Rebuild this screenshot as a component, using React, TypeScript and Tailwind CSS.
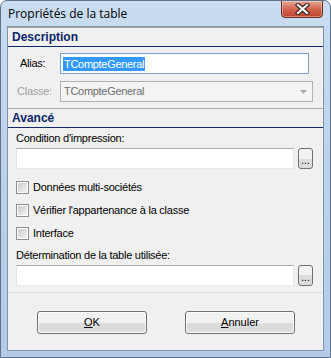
const font = { fontFamily: '"Liberation Sans", Arial, sans-serif' };

function Checkbox({ label }: { label: string }) {
  return (
    <div className="flex h-[13px] items-center gap-[4px] pl-[8px]">
      <div className="flex h-[13px] w-[13px] items-center justify-center border border-[#8e8f8f] bg-white">
        <div className="h-[9px] w-[9px] bg-gradient-to-br from-[#cbcbcb] to-[#f4f4f4]" />
      </div>
      <span className="text-[11px] leading-[13px] tracking-[-0.25px] text-black">{label}</span>
    </div>
  );
}

function Ellipsis() {
  return (
    <div className="flex h-[21px] w-[15px] items-end justify-center rounded-[3px] border border-[#707070] bg-gradient-to-b from-[#f2f2f2] from-50% to-[#dcdcdc] to-50% pb-[2px] text-[10px] leading-[10px] text-black">
      ...
    </div>
  );
}

function TextInput() {
  return (
    <div className="h-[21px] w-[278px] border border-[#e3e9ef] border-t-[#abadb3] border-l-[#e2e3ea] bg-white" />
  );
}

function Header({ title }: { title: string }) {
  return (
    <div className="flex h-[20px] items-center border-t border-b border-t-[#a7a7a7] border-b-[#0e2a68] bg-[#f0f0f0] pl-[4px]">
      <span className="text-[12px] font-bold leading-[14px] text-[#0a2468]">{title}</span>
    </div>
  );
}

function Button({ mnemonic, rest }: { mnemonic: string; rest: string }) {
  return (
    <div className="flex h-[23px] w-[110px] items-center justify-center rounded-[3px] border border-[#707070] bg-gradient-to-b from-[#f2f2f2] from-50% to-[#dcdcdc] to-50% text-[11px] text-black shadow-[inset_0_0_0_1px_#fcfcfc]">
      <span>
        <span className="underline">{mnemonic}</span>
        {rest}
      </span>
    </div>
  );
}

export default function App() {
  return (
    <div
      className="relative flex h-[358px] w-[331px] flex-col overflow-hidden rounded-t-[7px] border border-[#5a7290] bg-gradient-to-b from-[#c9dcf0] via-[#bcd2ea] to-[#b3cbe6]"
      style={font}
    >
      {/* title bar */}
      <div className="flex h-[25px] items-start justify-between">
        <span
          className="pl-[7px] pt-[5px] text-[12px] leading-[15px] text-black"
          style={{ fontFamily: '"Open Sans", "Liberation Sans", sans-serif' }}
        >
          Propriétés de la table
        </span>
        <div className="mr-[7px] mt-[-1px] flex h-[18px] w-[42px] items-center justify-center rounded-b-[4px] border border-[#6b2d22] bg-gradient-to-b from-[#e6a698] via-[#d0664f] to-[#c1432c] shadow-[inset_0_0_0_1px_rgba(255,255,255,0.35)]">
          <svg width="15" height="12" viewBox="0 0 15 12">
            <path d="M3 2 L12 10 M12 2 L3 10" stroke="#3b2424" strokeWidth="4.5" strokeLinecap="square" />
            <path d="M3 2 L12 10 M12 2 L3 10" stroke="#ffffff" strokeWidth="2.2" strokeLinecap="square" />
          </svg>
        </div>
      </div>

      {/* client area */}
      <div className="mx-[6px] flex flex-col border border-[#7f93aa] bg-[#f0f0f0]">
        <Header title="Description" />
        <div className="flex flex-col gap-[7px] pb-[6px] pt-[6px]">
          <div className="flex h-[21px] items-center">
            <span className="w-[52px] pl-[12px] text-[11px] tracking-[-0.25px] text-black">Alias:</span>
            <div className="flex h-[21px] w-[249px] items-center border border-[#7da2ce] bg-white pl-[2px]">
              <span className="bg-[#3399ff] px-[1px] text-[11px] leading-[14px] tracking-[-0.3px] text-white">TCompteGeneral</span>
            </div>
          </div>
          <div className="flex h-[21px] items-center">
            <span className="w-[52px] pl-[9px] text-[11px] tracking-[-0.25px] text-[#a0a0a0]">Classe:</span>
            <div className="flex h-[21px] w-[253px] items-center justify-between border border-[#adb2b5] bg-[#f4f4f4] pl-[3px] pr-[5px]">
              <span className="text-[11px] tracking-[-0.3px] text-[#6d6d6d]">TCompteGeneral</span>
              <svg width="7" height="4" viewBox="0 0 7 4">
                <path d="M0 0 H7 L3.5 4 Z" fill="#a9a9a9" />
              </svg>
            </div>
          </div>
        </div>

        <Header title="Avancé" />
        <div className="flex flex-col border-b border-[#d9d9d9] pb-[6px] pt-[4px]">
          <span className="pl-[8px] text-[11px] leading-[13px] tracking-[-0.25px] text-black">Condition d'impression:</span>
          <div className="mt-[3px] flex items-center gap-[4px] pl-[8px]">
            <TextInput />
            <Ellipsis />
          </div>
          <div className="mt-[12px] flex flex-col gap-[10px]">
            <Checkbox label="Données multi-sociétés" />
            <Checkbox label="Vérifier l'appartenance à la classe" />
            <Checkbox label="Interface" />
          </div>
          <span className="mt-[9px] pl-[8px] text-[11px] leading-[13px] tracking-[-0.25px] text-black">
            Détermination de la table utilisée:
          </span>
          <div className="mt-[3px] flex items-center gap-[4px] pl-[8px]">
            <TextInput />
            <Ellipsis />
          </div>
        </div>

        <div className="flex h-[57px] items-center gap-[38px] pl-[29px] pt-[1px]">
          <Button mnemonic="O" rest="K" />
          <Button mnemonic="A" rest="nnuler" />
        </div>
      </div>
    </div>
  );
}
